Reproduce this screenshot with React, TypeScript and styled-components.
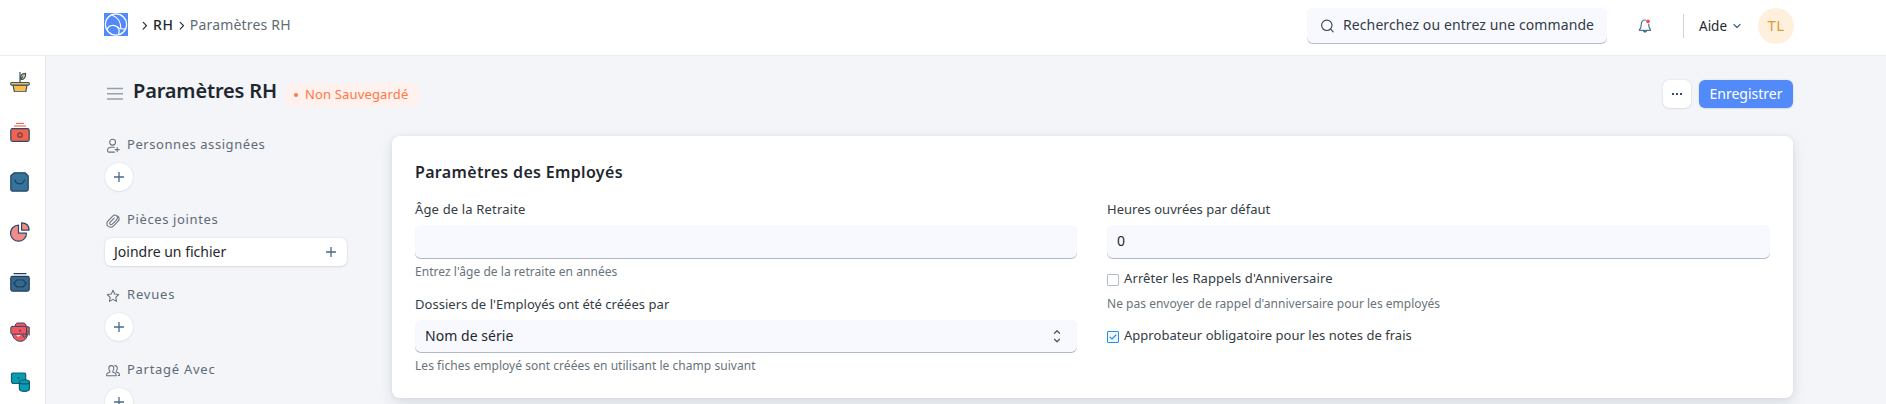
import React from "react";
import styled, { createGlobalStyle } from "styled-components";

const Global = createGlobalStyle`
  *, *::before, *::after { box-sizing: border-box; }
  body { margin: 0; background: #f3f5f9; font-family: "Noto Sans", "Liberation Sans", sans-serif; color: #1f272e; overflow: hidden; }
  button { font-family: inherit; cursor: pointer; }
  svg { display: block; flex: none; }
`;

const Page = styled.div`
  display: flex;
  flex-direction: column;
  width: 100%;
  height: 404px;
  overflow: hidden;
`;

const Text = styled.span<{ $size: number; $ls?: number; $color?: string; $line?: number; $weight?: number }>`
  font-size: ${(p) => p.$size}px;
  font-weight: ${(p) => p.$weight ?? 400};
  line-height: ${(p) => p.$line ?? 20}px;
  letter-spacing: ${(p) => p.$ls ?? 0}px;
  color: ${(p) => p.$color ?? "#1f272e"};
  white-space: nowrap;
`;

/* ---- Navbar ---- */
const Navbar = styled.header`
  display: flex;
  align-items: flex-start;
  justify-content: space-between;
  flex: none;
  height: 56px;
  padding: 8px 92px 0 104px;
  background: #fff;
  border-bottom: 1px solid #e8ecef;
`;

const Breadcrumbs = styled.nav`
  display: flex;
  align-items: center;
  height: 34px;
`;

const LogoBox = styled.span`
  margin: 0 14px 1px 0;
`;

const Crumb = styled.span`
  display: flex;
  align-items: center;
  gap: 5px;
  & + & { margin-left: 5px; }
`;

const NavTools = styled.div`
  display: flex;
  align-items: center;
  height: 36px;
`;

const Search = styled.div`
  display: flex;
  align-items: center;
  width: 300px;
  height: 36px;
  padding: 0 0 2px 13px;
  gap: 8px;
  border-radius: 6px;
  background: #f8f9fe;
  box-shadow: inset 0 -1px 0 #b5bfca;
`;

const Bell = styled.span`
  margin-left: 30px;
`;

const Divider = styled.span`
  width: 1px;
  height: 24px;
  margin: 0 15px 0 30px;
  background: #d1d8dd;
`;

const Help = styled.div`
  display: flex;
  align-items: center;
  gap: 6px;
  width: 59px;
`;

const Avatar = styled.div`
  display: flex;
  align-items: center;
  justify-content: center;
  width: 36px;
  height: 36px;
  padding-bottom: 2px;
  border-radius: 50%;
  background: #fff0dd;
`;

/* ---- Body ---- */
const Body = styled.div`
  display: flex;
  flex: 1;
  min-height: 0;
`;

const Rail = styled.aside`
  display: flex;
  flex-direction: column;
  gap: 30px;
  flex: none;
  width: 46px;
  padding: 16px 0 0 10px;
  background: #fff;
  border-right: 1px solid #e2e7eb;
`;

const Content = styled.main`
  display: flex;
  flex-direction: column;
  flex: 1;
  min-width: 0;
  padding: 0 93px 0 59px;
`;

const PageHead = styled.div`
  display: flex;
  align-items: flex-start;
  flex: none;
  height: 80px;
  padding-top: 20px;
`;

const MenuIcon = styled.span`
  margin: 11px 10px 0 2px;
`;

const Title = styled.h1`
  margin: 1px 0 0;
  font-size: 20px;
  font-weight: 600;
  line-height: 28px;
  letter-spacing: -0.16px;
  white-space: nowrap;
`;

const Pill = styled.span`
  display: flex;
  align-items: center;
  gap: 7px;
  height: 24px;
  margin: 7px 0 0 8px;
  padding: 0 11px 2px 9px;
  border-radius: 8px;
  background: #fff1ed;
`;

const Dot = styled.i`
  width: 4px;
  height: 4px;
  margin-top: 2px;
  border-radius: 50%;
  background: #ff7846;
`;

const Actions = styled.div`
  display: flex;
  gap: 8px;
  margin: 4px 0 0 auto;
`;

const Button = styled.button<{ $primary?: boolean }>`
  display: flex;
  align-items: center;
  justify-content: center;
  width: ${(p) => (p.$primary ? 94 : 28)}px;
  height: 28px;
  padding: 0;
  border: 0;
  border-radius: 6px;
  background: ${(p) => (p.$primary ? "#528bf9" : "#fff")};
  box-shadow: 0 0 2px rgba(25, 39, 52, 0.16), 0 1px 2px rgba(25, 39, 52, 0.06);
`;

const Columns = styled.div`
  display: flex;
  align-items: flex-start;
`;

const SidePanel = styled.div`
  display: flex;
  flex-direction: column;
  gap: 18px;
  flex: none;
  width: 242px;
  margin-top: -2px;
`;

const SideSection = styled.section`
  display: flex;
  flex-direction: column;
  gap: 9px;
`;

const SideLabel = styled.div`
  display: flex;
  align-items: center;
  gap: 6px;
  height: 20px;
  svg { margin-top: 4px; }
`;

const AddRound = styled.button`
  display: flex;
  align-items: center;
  justify-content: center;
  width: 28px;
  height: 28px;
  padding: 0;
  border: 0;
  border-radius: 50%;
  background: #fff;
  box-shadow: 0 0 2px rgba(25, 39, 52, 0.12), 0 1px 2px rgba(25, 39, 52, 0.06);
`;

const AttachButton = styled.button`
  display: flex;
  align-items: center;
  justify-content: space-between;
  height: 28px;
  padding: 0 11px 0 9px;
  border: 0;
  border-radius: 6px;
  background: #fff;
  box-shadow: 0 0 2px rgba(25, 39, 52, 0.16), 0 1px 2px rgba(25, 39, 52, 0.08);
`;

const Card = styled.section`
  flex: 1;
  height: 262px;
  margin-left: 45px;
  padding: 24px 23px 0;
  border-radius: 8px;
  background: #fff;
  box-shadow: 0 5px 14px rgba(25, 39, 52, 0.12), 0 0 4px rgba(25, 39, 52, 0.05);
`;

const CardTitle = styled.h2`
  margin: 0 0 15px;
  font-size: 16px;
  font-weight: 600;
  line-height: 24px;
  letter-spacing: 0.33px;
`;

const FormGrid = styled.div`
  display: grid;
  grid-template-columns: 662px 1fr;
  column-gap: 30px;
`;

const FormColumn = styled.div`
  display: flex;
  flex-direction: column;
`;

const Field = styled.div`
  display: flex;
  flex-direction: column;
  & + & { margin-top: 13px; }
`;

const Control = styled.div<{ $height?: number }>`
  display: flex;
  align-items: center;
  justify-content: space-between;
  height: ${(p) => p.$height ?? 34}px;
  margin-top: 6px;
  padding: 0 14px 2px 10px;
  border-radius: 6px;
  background: #f8f9fe;
  box-shadow: inset 0 -1px 0 #b0bac6;
`;

const Hint = styled.div<{ $gap: number }>`
  display: flex;
  margin-top: ${(p) => p.$gap}px;
`;

const CheckRow = styled.label<{ $gap: number }>`
  display: flex;
  align-items: flex-start;
  gap: 5px;
  height: 20px;
  margin-top: ${(p) => p.$gap}px;
`;

const CheckBox = styled.span<{ $checked?: boolean }>`
  display: flex;
  align-items: center;
  justify-content: center;
  width: 12px;
  height: 12px;
  margin-top: 6px;
  border: 1px solid ${(p) => (p.$checked ? "#2490ef" : "#b3bcc5")};
  border-radius: 1px;
  background: ${(p) => (p.$checked ? "#f0f8ff" : "#fff")};
`;

/* ---- Icons ---- */
const Chevron = () => (
  <svg width="6" height="10" viewBox="0 0 6 10" fill="none" stroke="#1f272e" strokeWidth="1.15" strokeLinecap="round" strokeLinejoin="round">
    <path d="M1.2 2.3 4.5 5.7 1.2 9.1" />
  </svg>
);

const Logo = () => (
  <svg width="24" height="23" viewBox="0 0 24 23" fill="none" stroke="#fff" strokeWidth="1.2">
    <rect width="24" height="23" fill="#528bf9" stroke="none" />
    <circle cx="12" cy="11.5" r="10.6" />
    <path d="M8 2c6 2.500 9.200 8 8.800 13.800" />
    <path d="M3 16.500c1.500-4.200 7-5.700 10.500-2.400 1.500 1.400 2 4.300 1 7.200" />
    <path d="M12.500 13.300c2.500 2.600 5 3.200 8.800 2.500" />
  </svg>
);

const Plus = () => (
  <svg width="10" height="10" viewBox="0 0 10 10" stroke="#456b8c" strokeWidth="1.3">
    <path d="M5 0v10M0 5h10" />
  </svg>
);

const lineIcon = {
  width: 16,
  height: 16,
  viewBox: "0 0 16 16",
  fill: "none",
  stroke: "#68737b",
  strokeWidth: 1.05,
  strokeLinecap: "round" as const,
  strokeLinejoin: "round" as const,
};

const AssignIcon = () => (
  <svg {...lineIcon}>
    <circle cx="7.6" cy="4.2" r="2.9" />
    <path d="M9.3 9.3H6c-2 0-3.4 1.3-3.5 3.2 0 1 .4 1.6 1.2 1.6h5.8M12.2 9.6v4M10.2 11.6h4" />
  </svg>
);

const ClipIcon = () => (
  <svg {...lineIcon}>
    <path d="m13.8 7.3-5.2 5.5c-1.7 1.8-4.2 1.8-5.7.4-1.5-1.5-1.4-3.8.2-5.4l4.6-4.7c1.2-1.2 2.9-1.2 4-.2 1.1 1.1 1 2.8-.1 3.9L7.3 11.2c-.7.7-1.6.7-2.2.1-.6-.6-.6-1.5.1-2.2L9.2 5.1" />
    <path d="M13.800 7.300c.6-1.700 0-3.400-1.200-4.300" />
  </svg>
);

const StarIcon = () => (
  <svg {...lineIcon}>
    <path d="m8 2.300 1.700 3.700 4 .5-2.900 2.800.7 4.100L8 11.400l-3.500 2 .7-4.100-2.900-2.800 4-.5z" />
  </svg>
);

const ShareIcon = () => (
  <svg {...lineIcon}>
    <path d="M6.300 2.600c1.600 0 2.600 1.200 2.500 2.900 0 1-.4 1.900-1 2.500v1.300l2.300.8c.8.3 1.100.9 1.100 2.700H1.600c0-1.800.3-2.400 1.100-2.700l2.200-.8V8c-.7-.6-1-1.500-1.100-2.500 0-1.700.9-2.900 2.500-2.900z" />
    <path d="M9.800 2.600c1.600 0 2.600 1.200 2.500 2.900 0 1-.4 1.900-1 2.500v1l2 .8c.8.3 1.200.9 1.200 2.700h-1.300" />
  </svg>
);

const navy = "#2d4a66";

const PotIcon = () => (
  <svg width="20" height="20" viewBox="0 0 20 20" fill="#fcbc4c" stroke="#35546f" strokeWidth="1.2" strokeLinejoin="round">
    <path d="M10 10.500V0" fill="none" />
    <path d="M10.700 7.700c-.9-3.600.8-6.300 4.900-6.400.4 3.700-1.300 6.200-4.900 6.400zM10.700 7.700l2-3.200" />
    <path d="M3 13h14l-1.200 6.800H4.400z" />
    <rect x=".7" y="10.500" width="18.600" height="2.600" rx="1" />
  </svg>
);

const CashIcon = () => (
  <svg width="20" height="20" viewBox="0 0 20 20">
    <path d="M6 1.400h8" stroke="#e8583f" strokeWidth="1" />
    <path d="M4 4h12" stroke="#f6a99a" strokeWidth="2" />
    <rect x=".8" y="6.600" width="18.400" height="12.800" rx="1.800" fill="#ee6450" stroke={navy} strokeWidth="1.2" />
    <circle cx="10" cy="13" r="2.200" fill="none" stroke="#7a3c4a" strokeWidth="1.3" />
  </svg>
);

const BagIcon = () => (
  <svg width="20" height="20" viewBox="0 0 20 20" fill="#35749a" stroke="#23405f" strokeWidth="1.2" strokeLinejoin="round" strokeLinecap="round">
    <path d="M4.300.8h11l2.900 3v13.500c0 1.100-.7 1.800-1.800 1.800H2.500c-1 0-1.700-.7-1.700-1.800V3.800z" />
    <path d="M4.800 7.800c1.300 5.300 8.300 5.300 9.600 0" fill="none" />
  </svg>
);

const PieIcon = () => (
  <svg width="20" height="20" viewBox="0 0 20 20" fill="#f18c8c" stroke={navy} strokeWidth="1.2" strokeLinejoin="round">
    <path d="M8.500 3.200v8h8a8 8 0 1 1-8-8z" />
    <path d="M11.600.8v7.300h7.500C19 3.800 16.200.9 11.600.8z" />
  </svg>
);

const StackIcon = () => (
  <svg width="20" height="20" viewBox="0 0 20 20" fill="#35688d" stroke="#203c5c" strokeWidth="1.2" strokeLinejoin="round" strokeLinecap="round">
    <path d="M4 1.600h12" />
    <rect x=".8" y="4.300" width="18.400" height="14.800" rx="1.800" />
    <path d="M6.500 8h7c.6 1.500 1.400 2.400 2.700 3.200-1.300.9-2.100 1.900-2.700 3.600h-7c-.6-1.700-1.400-2.700-2.700-3.600C5.100 10.400 5.900 9.500 6.500 8z" />
  </svg>
);

const FaceIcon = () => (
  <svg width="20" height="20" viewBox="0 0 20 20" fill="#f2565f" stroke={navy} strokeWidth="1" strokeLinejoin="round" strokeLinecap="round">
    <path d="M2.200 9c-.5 6 3.200 10.300 8 10.300s7.700-3.600 7.800-10.300z" />
    <path d="M5 4.500C5.300 2.200 6 1.200 7.600 1h6c1.700.2 2.500 1.300 2.600 3.500l3 .6v8" />
    <rect x=".8" y="4.400" width="15.700" height="7.700" rx="1.400" />
    <path d="M7 13.600c1.300.9 2.400.6 3-.4" fill="#fff" stroke="#fff" />
    <path d="M13 13c-.2 1.500.6 2.600 1.700 2.200 1.400-.5 2.100-2.600 2.300-6.200" fill="none" />
    <circle cx="10" cy="8.700" r=".9" fill={navy} stroke="none" />
  </svg>
);

const DatabaseIcon = () => (
  <svg width="20" height="20" viewBox="0 0 20 20" fill="#089eb2" stroke="#155a74" strokeWidth="1.2" strokeLinejoin="round">
    <path d="M2.800 1h11.600c.8 0 1.300.5 1.300 1.300v9.200H4c-1.500 0-2.500-.8-2.500-2.200V2.300C1.500 1.500 2 1 2.800 1z" />
    <circle cx="8.500" cy="6" r="1" fill="#155a74" stroke="none" />
    <path d="M9.400 9.800v7c0 3.400 10 3.400 10 0v-7z" />
    <ellipse cx="14.400" cy="9.900" rx="5" ry="2" />
  </svg>
);

const BellIcon = () => (
  <svg width="16" height="16" viewBox="0 0 16 16" fill="none" stroke="#537693" strokeWidth="1.2" strokeLinecap="round" strokeLinejoin="round">
    <path d="M8.600 2C5.600 1.900 4.300 3.900 4.300 6.200c0 2.800-.3 3.800-1.900 5.600v.5h11.200v-.5c-1.500-1.700-1.900-2.800-1.900-5V6" />
    <path d="M6.300 12.800c.2 1.700 3.200 1.700 3.400 0" fill="#537693" />
    <circle cx="11" cy="3.300" r="1.900" fill="#ff4d4d" stroke="none" />
  </svg>
);

const railIcons = [PotIcon, CashIcon, BagIcon, PieIcon, StackIcon, FaceIcon, DatabaseIcon];

export default function App() {
  return (
    <Page>
      <Global />
      <Navbar>
        <Breadcrumbs>
          <LogoBox><Logo /></LogoBox>
          <Crumb><Chevron /><Text $size={14} $weight={500} $ls={0.7}>RH</Text></Crumb>
          <Crumb><Chevron /><Text $size={14} $ls={0.19} $color="#5f6b74">Paramètres RH</Text></Crumb>
        </Breadcrumbs>
        <NavTools>
          <Search>
            <svg width="15" height="15" viewBox="0 0 15 15" fill="none" stroke="#414b54" strokeWidth="1.2" strokeLinecap="round">
              <circle cx="6.800" cy="7.300" r="5.200" /><path d="m10.700 11.200 2.500 2.600" />
            </svg>
            <Text $size={14} $ls={0.1} $color="#333c44">Recherchez ou entrez une commande</Text>
          </Search>
          <Bell><BellIcon /></Bell>
          <Divider />
          <Help>
            <Text $size={13.5}>Aide</Text>
            <svg width="8" height="6" viewBox="0 0 8 6" fill="none" stroke="#45647f" strokeWidth="1.2" strokeLinecap="round" strokeLinejoin="round">
              <path d="M1 1.500 4 4.500 7 1.500" />
            </svg>
          </Help>
          <Avatar><Text $size={15} $ls={0.4} $color="#db9a3c">TL</Text></Avatar>
        </NavTools>
      </Navbar>
      <Body>
        <Rail>{railIcons.map((Icon, i) => <Icon key={i} />)}</Rail>
        <Content>
          <PageHead>
            <MenuIcon>
              <svg width="16" height="13" viewBox="0 0 16 13" stroke="#98a1a9" strokeWidth="1.5">
                <path d="M0 1.500h16M0 6.700h16M0 12h16" />
              </svg>
            </MenuIcon>
            <Title>Paramètres RH</Title>
            <Pill><Dot /><Text $size={13} $ls={0.16} $color="#ff7846">Non Sauvegardé</Text></Pill>
            <Actions>
              <Button aria-label="Menu">
                <svg width="10" height="2" viewBox="0 0 10 2" fill="#2c4f70">
                  <rect width="2" height="2" /><rect x="4" width="2" height="2" /><rect x="8" width="2" height="2" />
                </svg>
              </Button>
              <Button $primary><Text $size={14} $color="#fff">Enregistrer</Text></Button>
            </Actions>
          </PageHead>
          <Columns>
            <SidePanel>
              <SideSection>
                <SideLabel><AssignIcon /><Text $size={13} $ls={0.56} $color="#5f6b74">Personnes assignées</Text></SideLabel>
                <AddRound><Plus /></AddRound>
              </SideSection>
              <SideSection>
                <SideLabel><ClipIcon /><Text $size={13} $ls={0.62} $color="#5f6b74">Pièces jointes</Text></SideLabel>
                <AttachButton><Text $size={14}>Joindre un fichier</Text><Plus /></AttachButton>
              </SideSection>
              <SideSection>
                <SideLabel><StarIcon /><Text $size={13} $ls={0.8} $color="#5f6b74">Revues</Text></SideLabel>
                <AddRound><Plus /></AddRound>
              </SideSection>
              <SideSection>
                <SideLabel><ShareIcon /><Text $size={13} $ls={0.72} $color="#5f6b74">Partagé Avec</Text></SideLabel>
                <AddRound><Plus /></AddRound>
              </SideSection>
            </SidePanel>
            <Card>
              <CardTitle>Paramètres des Employés</CardTitle>
              <FormGrid>
                <FormColumn>
                  <Field>
                    <Text $size={13} $ls={0.16} $color="#333c44">Âge de la Retraite</Text>
                    <Control />
                    <Hint $gap={4}><Text $size={12} $line={18} $ls={0.04} $color="#68737b">Entrez l'âge de la retraite en années</Text></Hint>
                  </Field>
                  <Field>
                    <Text $size={13} $ls={0.04} $color="#333c44">Dossiers de l'Employés ont été créées par</Text>
                    <Control $height={33}>
                      <Text $size={14} $ls={0.05}>Nom de série</Text>
                      <svg width="12" height="14" viewBox="0 0 12 14" fill="none" stroke="#4c5a67" strokeWidth="1.3" strokeLinecap="round" strokeLinejoin="round">
                        <path d="M3.500 4.300 6 1.800l2.500 2.500M3.500 10.200 6 12.700l2.500-2.500" />
                      </svg>
                    </Control>
                    <Hint $gap={4}><Text $size={12} $line={18} $ls={0.04} $color="#68737b">Les fiches employé sont créées en utilisant le champ suivant</Text></Hint>
                  </Field>
                </FormColumn>
                <FormColumn>
                  <Field>
                    <Text $size={13} $ls={0.02} $color="#333c44">Heures ouvrées par défaut</Text>
                    <Control><Text $size={14}>0</Text></Control>
                  </Field>
                  <CheckRow $gap={9}>
                    <CheckBox />
                    <Text $size={13} $ls={0.1} $color="#333c44">Arrêter les Rappels d'Anniversaire</Text>
                  </CheckRow>
                  <Hint $gap={7}><Text $size={12} $line={18} $ls={0.02} $color="#68737b">Ne pas envoyer de rappel d'anniversaire pour les employés</Text></Hint>
                  <CheckRow $gap={12}>
                    <CheckBox $checked>
                      <svg width="8" height="6" viewBox="0 0 8 6" fill="none" stroke="#2490ef" strokeWidth="1.1" strokeLinecap="round" strokeLinejoin="round">
                        <path d="M1 3.100 3 5 7 1" />
                      </svg>
                    </CheckBox>
                    <Text $size={13} $ls={0.025} $color="#333c44">Approbateur obligatoire pour les notes de frais</Text>
                  </CheckRow>
                </FormColumn>
              </FormGrid>
            </Card>
          </Columns>
        </Content>
      </Body>
    </Page>
  );
}
